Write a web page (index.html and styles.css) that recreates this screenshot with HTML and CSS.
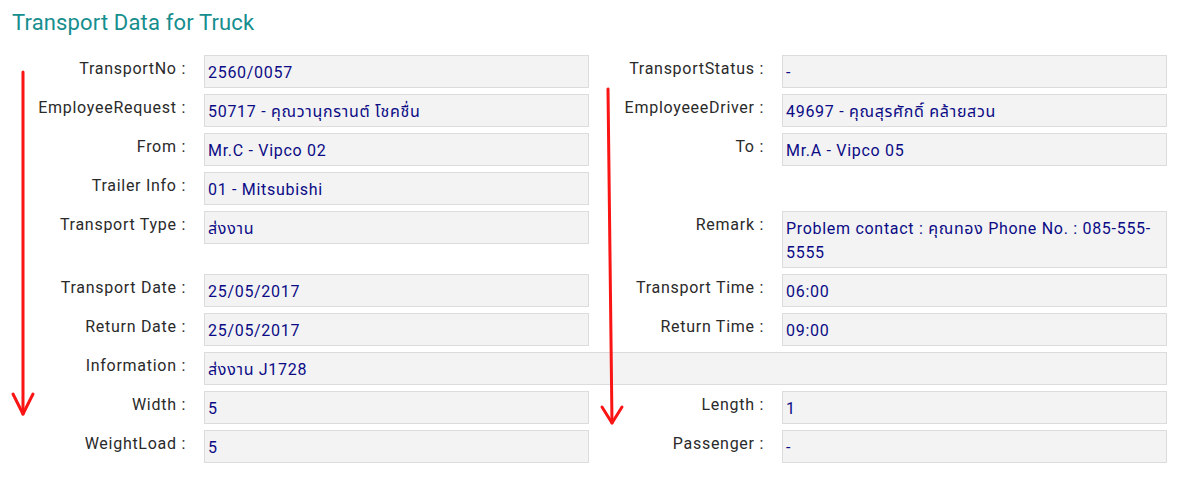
FILE: index.html
```html
<!DOCTYPE html>
<html>
<head>
<meta charset="utf-8">
<title>Transport Data for Truck</title>
<link rel="stylesheet" href="styles.css">
</head>
<body>
<div class="page">
  <h2 class="title">Transport Data for Truck</h2>
  <div class="form">
    <div class="lbl">TransportNo :</div><div class="val">2560/0057</div>
    <div class="lbl">TransportStatus :</div><div class="val">-</div>

    <div class="lbl">EmployeeRequest :</div><div class="val">50717 - คุณวานุกรานต์ โชคชื่น</div>
    <div class="lbl">EmployeeeDriver :</div><div class="val">49697 - คุณสุรศักดิ์ คล้ายสวน</div>

    <div class="lbl">From :</div><div class="val">Mr.C - Vipco 02</div>
    <div class="lbl">To :</div><div class="val">Mr.A - Vipco 05</div>

    <div class="lbl">Trailer Info :</div><div class="val">01 - Mitsubishi</div>
    <div class="lbl"></div><div class="empty"></div>

    <div class="lbl">Transport Type :</div><div class="val">ส่งงาน</div>
    <div class="lbl">Remark :</div><div class="val">Problem contact : คุณทอง Phone No. : 085-555-<wbr>5555</div>

    <div class="lbl">Transport Date :</div><div class="val">25/05/2017</div>
    <div class="lbl">Transport Time :</div><div class="val">06:00</div>

    <div class="lbl">Return Date :</div><div class="val">25/05/2017</div>
    <div class="lbl">Return Time :</div><div class="val">09:00</div>

    <div class="lbl">Information :</div><div class="val wide">ส่งงาน J1728</div>

    <div class="lbl">Width :</div><div class="val">5</div>
    <div class="lbl">Length :</div><div class="val">1</div>

    <div class="lbl">WeightLoad :</div><div class="val">5</div>
    <div class="lbl">Passenger :</div><div class="val">-</div>
  </div>
  <svg class="marks" width="1193" height="480" viewBox="0 0 1193 480">
    <g fill="none" stroke="#fa1414" stroke-width="3" stroke-linecap="round" stroke-linejoin="round">
      <path d="M23 64 L23 406"/>
      <path d="M13 386 L23 406 L33 386"/>
      <path d="M608 81 L612 415"/>
      <path d="M602 399 L612 415 L622 399"/>
    </g>
  </svg>
</div>
</body>
</html>
```

FILE: styles.css
```css
html, body {
  margin: 0;
  padding: 0;
  background: #ffffff;
}

.page {
  position: relative;
  width: 1193px;
  height: 480px;
  padding: 0 0 0 11px;
  box-sizing: border-box;
  font-family: Roboto, "Noto Sans Thai", "Noto Sans", "Liberation Sans", sans-serif;
  font-size: 16px;
}

.title {
  margin: 8px 0 17px 1px;
  font-size: 22px;
  line-height: 30px;
  font-weight: 400;
  letter-spacing: 0.15px;
  color: #168e8e;
}

.form {
  display: grid;
  grid-template-columns: 193px 385px 193px 385px;
  row-gap: 6px;
  align-items: start;
}

.lbl {
  text-align: right;
  padding: 2px 18px 0 0;
  line-height: 24px;
  letter-spacing: 0.72px;
  color: #2a2a2a;
}

.val {
  background: #f3f3f3;
  border: 1px solid #dcdcdc;
  padding: 5px 3px 2px 3px;
  line-height: 24px;
  min-height: 24px;
  letter-spacing: 0.7px;
  color: #0b0b86;
}

.wide {
  grid-column: 2 / 5;
}

.marks {
  position: absolute;
  left: 0;
  top: 0;
  pointer-events: none;
}
```
